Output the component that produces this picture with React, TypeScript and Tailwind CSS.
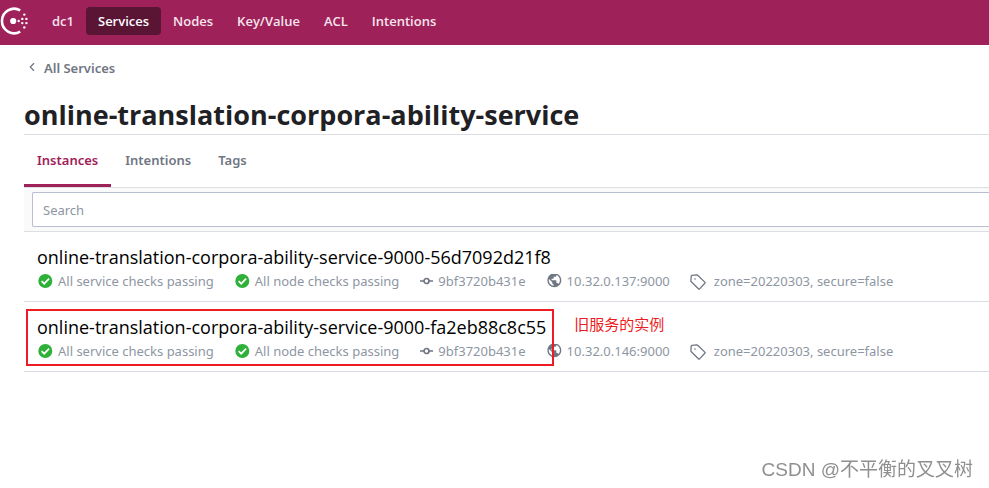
import { ChevronLeft } from 'lucide-react';

interface Instance {
  id: string;
  node: string;
  address: string;
  meta: string;
  note?: string;
}

const NAV_ITEMS = ['Services', 'Nodes', 'Key/Value', 'ACL', 'Intentions'];

const TABS = ['Instances', 'Intentions', 'Tags'];

const INSTANCES: Instance[] = [
  {
    id: 'online-translation-corpora-ability-service-9000-56d7092d21f8',
    node: '9bf3720b431e',
    address: '10.32.0.137:9000',
    meta: 'zone=20220303, secure=false',
  },
  {
    id: 'online-translation-corpora-ability-service-9000-fa2eb88c8c55',
    node: '9bf3720b431e',
    address: '10.32.0.146:9000',
    meta: 'zone=20220303, secure=false',
    note: '旧服务的实例',
  },
];

function ConsulLogo() {
  return (
    <svg viewBox="0 0 28 28" className="h-7 w-7 shrink-0 fill-white" aria-hidden="true">
      <path d="M20.2 3.4A12.2 12.2 0 1 0 20.2 24.6" fill="none" stroke="#fff" strokeWidth="2.6" />
      <circle cx="13.2" cy="14" r="3.1" />
      <circle cx="18.7" cy="14" r="1.2" />
      <circle cx="22.3" cy="11.9" r="1.2" />
      <circle cx="22.3" cy="16.1" r="1.2" />
      <circle cx="26.4" cy="11.9" r="1.2" />
      <circle cx="26.4" cy="16.1" r="1.2" />
      <circle cx="24.3" cy="7.6" r="1.2" />
      <circle cx="24.3" cy="20.4" r="1.2" />
    </svg>
  );
}

function CheckIcon() {
  return (
    <svg viewBox="0 0 16 16" className="h-4 w-4 shrink-0" aria-hidden="true">
      <circle cx="8.3" cy="7" r="7" fill="#2eb039" />
      <path d="M4.6 7.2L7.2 9.7L12.1 4.7" fill="none" stroke="#fff" strokeWidth="1.7" />
    </svg>
  );
}

function NodeIcon() {
  return (
    <svg viewBox="0 0 14 14" className="h-3.5 w-3.5 shrink-0" fill="none" stroke="#6f7682" strokeWidth="1.7" aria-hidden="true">
      <circle cx="7.5" cy="6" r="2.5" />
      <path d="M1 6H5M10 6H14" />
    </svg>
  );
}

function GlobeIcon() {
  return (
    <svg viewBox="0 3 23 23" className="h-4 w-4 shrink-0 fill-[#6f7682]" aria-hidden="true">
      <path d="M12 2C6.48 2 2 6.48 2 12s4.48 10 10 10 10-4.48 10-10S17.52 2 12 2zm-1 17.93c-3.95-.49-7-3.85-7-7.93 0-.62.08-1.21.21-1.79L9 15v1c0 1.1.9 2 2 2v1.93zm6.9-2.54c-.26-.81-1-1.39-1.9-1.39h-1v-3c0-.55-.45-1-1-1H8v-2h2c.55 0 1-.45 1-1V7h2c1.1 0 2-.9 2-2v-.41c2.93 1.19 5 4.06 5 7.41 0 2.08-.8 3.97-2.1 5.39z" />
    </svg>
  );
}

function TagIcon() {
  return (
    <svg viewBox="0 -1 16 17" className="h-[17px] w-4 shrink-0" aria-hidden="true">
      <path
        d="M1.9 1.3L6.8 0.8Q7.3 0.8 7.7 1.2L14.8 8.1Q15.4 8.7 14.8 9.3L9.6 14.9Q9 15.4 8.4 14.8L1.3 7.8Q0.9 7.4 0.9 6.9L1.2 2Q1.3 1.4 1.9 1.3Z"
        fill="none"
        stroke="#6f7682"
        strokeWidth="1.3"
      />
      <circle cx="5" cy="5" r="0.8" fill="#6f7682" />
    </svg>
  );
}

function InstanceRow({ instance }: { instance: Instance }) {
  return (
    <li className="relative border-b border-[#dbdbe5] pt-3 pb-2 pl-[13px]">
      <div className="flex items-start gap-7">
        <a href="#instance" className="font-['Open_Sans',sans-serif] text-[18px] leading-[26px] text-black">
          {instance.id}
        </a>
        {instance.note && (
          <span className="text-[15px] leading-5 text-[#ed1c24]">{instance.note}</span>
        )}
      </div>
      <ul className="flex items-center gap-5 text-[13px] leading-[23px] whitespace-nowrap text-[#8e96a3]">
        <li className="flex items-center gap-[5px]">
          <CheckIcon />
          All service checks passing
        </li>
        <li className="flex items-center gap-[5px]">
          <CheckIcon />
          All node checks passing
        </li>
        <li className="flex items-center gap-[5px]">
          <NodeIcon />
          {instance.node}
        </li>
        <li className="flex items-center gap-[5px]">
          <GlobeIcon />
          {instance.address}
        </li>
        <li className="flex items-center gap-2">
          <TagIcon />
          {instance.meta}
        </li>
      </ul>
      {instance.note && (
        <div className="pointer-events-none absolute top-[7px] left-0.5 h-[57px] w-[528px] border-2 border-[#ed1c24]" />
      )}
    </li>
  );
}

export default function App() {
  return (
    <div className="min-h-screen overflow-x-hidden bg-white font-['Noto_Sans','Noto_Sans_CJK_SC',sans-serif]">
      <header className="flex h-[45px] items-center bg-[#9e2159] pb-1 font-['Open_Sans',sans-serif] text-[13px] font-semibold text-[#f7e4ed]">
        <ConsulLogo />
        <nav className="ml-3 flex items-center">
          <a href="#dc1" className="px-3 py-1 leading-5">
            dc1
          </a>
          {NAV_ITEMS.map((item) => (
            <a
              key={item}
              href={`#${item}`}
              className={
                item === 'Services'
                  ? 'rounded bg-[#5a1434] px-3 py-1 leading-5 text-white'
                  : 'px-3 py-1 leading-5'
              }
            >
              {item}
            </a>
          ))}
        </nav>
      </header>

      <main className="pl-6">
        <a href="#services" className="flex items-center gap-1 pt-[11px] text-[13px] leading-6 font-semibold text-[#6f7682]">
          <ChevronLeft className="h-4 w-4 pb-0.5" />
          All Services
        </a>

        <h1 className="mt-4 border-b border-[#dcdee3] font-['Open_Sans',sans-serif] text-[27px] leading-[38px] font-bold text-[#1f2124]">
          online-translation-corpora-ability-service
        </h1>

        <nav className="flex gap-px border-b border-[#dcdee3] text-[13px] leading-5 font-semibold">
          {TABS.map((tab) => (
            <a
              key={tab}
              href={`#${tab}`}
              className={
                tab === 'Instances'
                  ? 'border-b-3 border-[#9e2159] px-[13px] pt-[15px] pb-3.5 text-[#9e2159]'
                  : 'border-b-3 border-transparent px-[13px] pt-[15px] pb-3.5 text-[#6f7682]'
              }
            >
              {tab}
            </a>
          ))}
        </nav>

        <div className="border-b border-[#dcdee3] bg-[#fafafb] py-1 pl-2">
          <input
            type="text"
            aria-label="Search"
            placeholder="Search"
            className="block h-[35px] w-full rounded-l-xs border border-r-0 border-[#b9bfd0] bg-white px-2.5 text-[13px] placeholder:text-[#8e96a3]"
          />
        </div>

        <ul>
          {INSTANCES.map((instance) => (
            <InstanceRow key={instance.id} instance={instance} />
          ))}
        </ul>
      </main>

      <p className="fixed right-4 bottom-1 font-['Liberation_Sans','Noto_Sans_CJK_SC',sans-serif] text-[19px] leading-7 text-[#8f8f8f]">
        CSDN @不平衡的叉叉树
      </p>
    </div>
  );
}
